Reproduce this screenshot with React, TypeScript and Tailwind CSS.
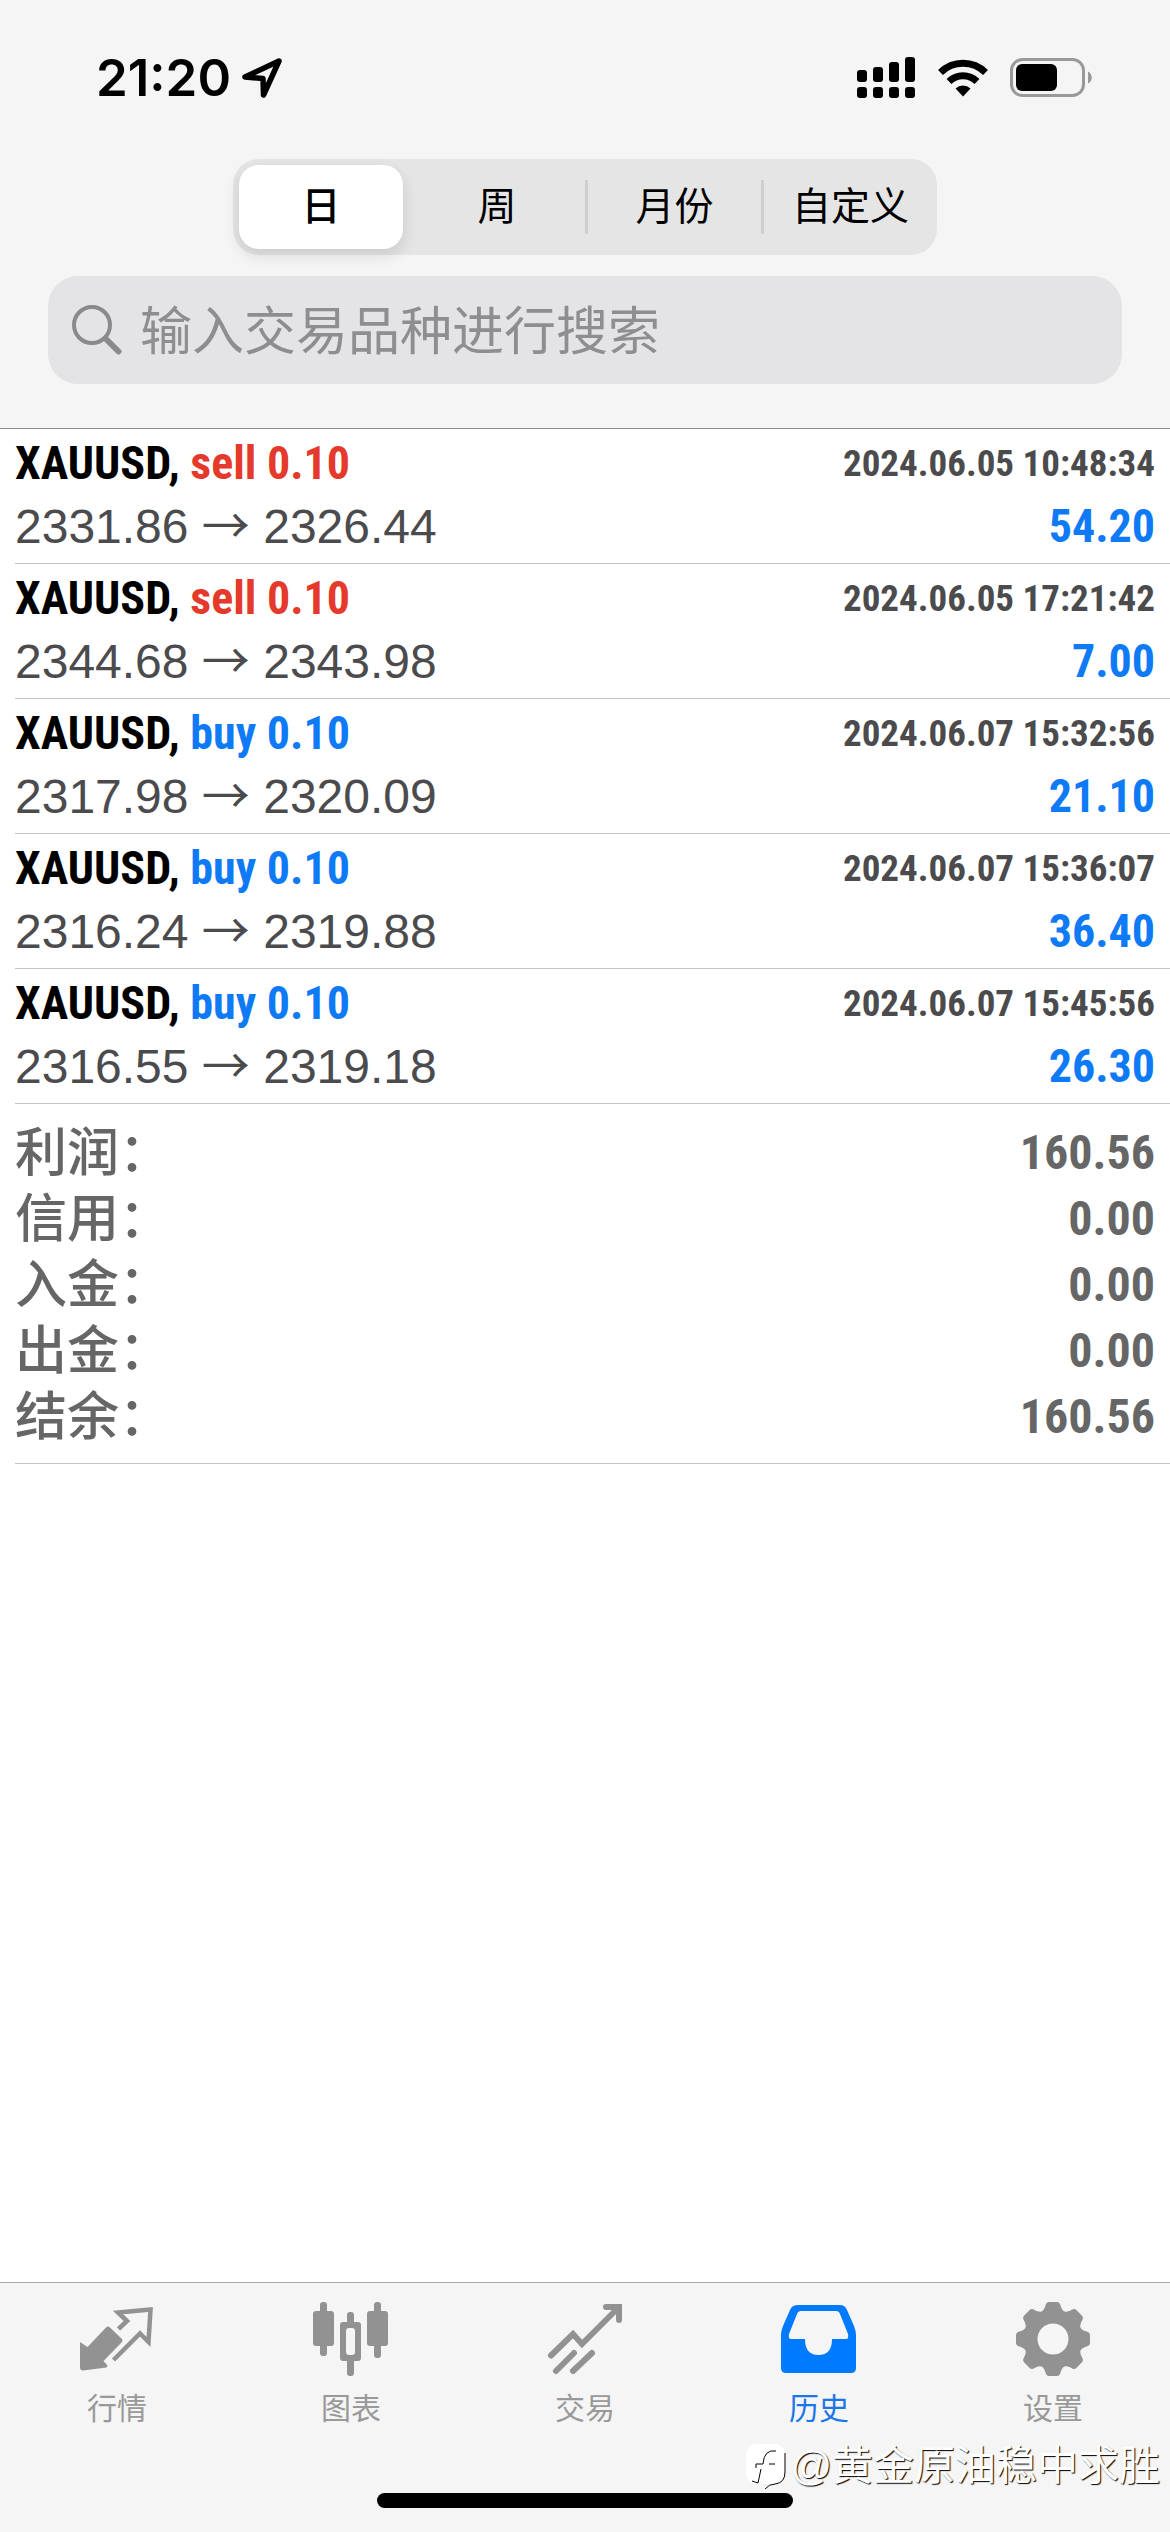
import type { ReactNode } from 'react';

interface Deal {
  side: 'buy' | 'sell';
  volume: string;
  open: string;
  close: string;
  time: string;
  profit: string;
}

const periods = ['日', '周', '月份', '自定义'];

const deals: Deal[] = [
  { side: 'sell', volume: '0.10', open: '2331.86', close: '2326.44', time: '2024.06.05 10:48:34', profit: '54.20' },
  { side: 'sell', volume: '0.10', open: '2344.68', close: '2343.98', time: '2024.06.05 17:21:42', profit: '7.00' },
  { side: 'buy', volume: '0.10', open: '2317.98', close: '2320.09', time: '2024.06.07 15:32:56', profit: '21.10' },
  { side: 'buy', volume: '0.10', open: '2316.24', close: '2319.88', time: '2024.06.07 15:36:07', profit: '36.40' },
  { side: 'buy', volume: '0.10', open: '2316.55', close: '2319.18', time: '2024.06.07 15:45:56', profit: '26.30' },
];

const summary = [
  { label: '利润', value: '160.56' },
  { label: '信用', value: '0.00' },
  { label: '入金', value: '0.00' },
  { label: '出金', value: '0.00' },
  { label: '结余', value: '160.56' },
];

function StatusBar() {
  return (
    <div className="flex items-center justify-between pt-[47px] pr-[77px] pl-24">
      <div className="flex items-center gap-[10px]">
        <span className="font-['Inter',sans-serif] text-[51px] leading-[62px] font-semibold">21:20</span>
        <svg width="42" height="42" viewBox="0 0 42 42" fill="none" stroke="#000" strokeWidth="5.5" strokeLinejoin="round">
          <path d="M38 4 4 20 22 21.500 22.500 38Z" />
        </svg>
      </div>
      <div className="flex items-center gap-[22px]">
        <svg width="60" height="42" viewBox="0 0 60 42">
          <rect x="1" y="13" width="10" height="12" rx="3" />
          <rect x="17" y="10" width="10" height="15" rx="3" />
          <rect x="33" y="5" width="10" height="20" rx="3" />
          <rect x="49" y="0" width="10" height="25" rx="3" />
          <rect x="1" y="30" width="10" height="11" rx="3" />
          <rect x="17" y="30" width="10" height="11" rx="3" />
          <rect x="33" y="30" width="10" height="11" rx="3" />
          <rect x="49" y="30" width="10" height="11" rx="3" />
        </svg>
        <svg width="50" height="38" viewBox="0 0 50 38">
          <g fill="none" stroke="#000" strokeWidth="7">
            <path d="M2.500 13.500a32 32 0 0 1 45 0" />
            <path d="M11 22.500a20 20 0 0 1 28 0" />
          </g>
          <path d="M17.500 29.500a11 11 0 0 1 15 0L25 37.500Z" />
        </svg>
        <svg width="83" height="40" viewBox="0 0 83 40">
          <rect x="1.500" y="1.500" width="72" height="36" rx="11" fill="none" stroke="#999" strokeWidth="3" />
          <rect x="6" y="6" width="41" height="27" rx="6" />
          <path d="M78 13.500c5 2 5 10 0 12Z" fill="#999" />
        </svg>
      </div>
    </div>
  );
}

function PeriodPicker() {
  return (
    <div className="mx-auto mt-[50px] grid h-24 w-[704px] grid-cols-4 rounded-[26px] bg-[#e5e5e5]">
      {periods.map((period, i) => (
        <div key={period} className="flex items-center">
          {i > 1 && <span className="h-[54px] w-[3px] bg-[#cfcfd1]" />}
          <button
            type="button"
            className={
              i === 0
                ? 'm-[6px] h-[84px] flex-1 rounded-[20px] bg-white text-[39px] font-medium shadow-[0_6px_16px_rgba(0,0,0,0.12)]'
                : 'h-full flex-1 text-[39px]'
            }
          >
            {period}
          </button>
        </div>
      ))}
    </div>
  );
}

function SearchBox() {
  return (
    <label className="mx-12 mt-[21px] mb-11 flex h-[108px] items-center gap-[18px] rounded-[30px] bg-[#e4e4e6] px-6">
      <svg width="50" height="50" viewBox="0 0 50 50" fill="none" stroke="#8a8a8e" strokeLinecap="round">
        <circle cx="20" cy="20" r="18" strokeWidth="4" />
        <path d="m33.500 33.500 13 13" strokeWidth="6" />
      </svg>
      <input
        type="search"
        aria-label="搜索"
        placeholder="输入交易品种进行搜索"
        className="min-w-0 flex-1 bg-transparent pt-1 text-[52px] leading-[64px] outline-none placeholder:text-[#8e8e90]"
      />
    </label>
  );
}

function DealRow({ deal }: { deal: Deal }) {
  return (
    <li className="border-b border-[#c4c4c6] pt-[3px] pr-[15px] pb-[5px]">
      <div className="flex h-[63px] items-center justify-between font-['Roboto_Condensed',sans-serif] leading-[63px] font-bold">
        <span className="text-[46px]">
          XAUUSD,{' '}
          <span className={deal.side === 'sell' ? 'text-[#e5392b]' : 'text-[#0f7af5]'}>
            {deal.side} {deal.volume}
          </span>
        </span>
        <time className="text-[37px] text-[#4b4b4e]">{deal.time}</time>
      </div>
      <div className="flex h-[63px] items-center justify-between leading-[63px]">
        <span className="text-[48px] text-[#4b4b4e]">
          {deal.open} <span className="font-['Noto_Sans_CJK_SC',sans-serif] leading-none">→</span> {deal.close}
        </span>
        <span className="font-['Roboto_Condensed',sans-serif] text-[46px] font-bold text-[#0f7af5]">{deal.profit}</span>
      </div>
    </li>
  );
}

function Summary() {
  return (
    <dl className="border-b border-[#c4c4c6] pt-4 pr-[15px] pb-[13px] leading-[66px] text-[#666]">
      {summary.map((line) => (
        <div key={line.label} className="flex h-[66px] items-center justify-between">
          <dt className="text-[52px] font-medium">{line.label}：</dt>
          <dd className="font-['Roboto_Condensed',sans-serif] text-[48px] font-bold">{line.value}</dd>
        </div>
      ))}
    </dl>
  );
}

const QuotesIcon = () => (
  <svg width="76" height="76" viewBox="0 0 76 76">
    <path d="M1 41 8.500 46 27 26.500q2-2 4 0l11.500 11q2 2 0 4L24.500 60l4 4.500-1 2L4 69.500q-3 0-3-3Z" fill="#929292" />
    <path d="M39.500 28 48 20 39 11.500 71.500 8.500 69.500 41 61 32.500 34.500 59" fill="none" stroke="#929292" strokeWidth="4.5" />
  </svg>
);

const ChartIcon = () => (
  <svg width="76" height="76" viewBox="0 0 76 76" fill="#929292">
    <rect x="0" y="10" width="21" height="35" rx="3" />
    <rect x="7" y="1" width="7" height="54" rx="3" />
    <path fillRule="evenodd" d="M30 21h15q3 0 3 3v33q0 3-3 3H30q-3 0-3-3V24q0-3 3-3Zm6 6q-3 0-3 3v21q0 3 3 3h3q3 0 3-3V30q0-3-3-3Z" />
    <rect x="34" y="11" width="7" height="14" rx="3" />
    <rect x="34" y="56" width="7" height="19" rx="3" />
    <rect x="54" y="10" width="21" height="35" rx="3" />
    <rect x="61" y="1" width="7" height="56" rx="3" />
  </svg>
);

const TradeIcon = () => (
  <svg width="76" height="76" viewBox="0 0 76 76" fill="none" stroke="#929292" strokeWidth="6" strokeLinecap="round">
    <path d="M4 54.500 26 33l9 10L71 7" />
    <path d="M59 6h13v13" />
    <path d="m9 70 18-18M26 70l19-18" />
  </svg>
);

const HistoryIcon = () => (
  <svg width="76" height="76" viewBox="0 0 76 76">
    <path
      fill="#007aff"
      fillRule="evenodd"
      d="M17 4h42q5 0 7 5l7 16q2 5 2 9v33q0 5-5 5H5q-5 0-5-5V34q0-4 2-9L9 9q2-5 8-5Zm3 6q-3 0-4 3L8 33q-1 5 2 5h14q0 16 13.500 16T51 38h14q3 0 2-5L59 13q-1-3-4-3Z"
    />
  </svg>
);

const SettingsIcon = () => (
  <svg width="76" height="76" viewBox="-38 -38 76 76">
    <circle r="22.500" fill="none" stroke="#929292" strokeWidth="14" />
    <g fill="#929292">
      {[0, 45, 90, 135, 180, 225, 270, 315].map((angle) => (
        <path key={angle} transform={`rotate(${angle})`} d="M-14-26q4-1 6-6l1-3q1-2 3-2h8q2 0 3 2l1 3q2 5 6 6Z" />
      ))}
    </g>
  </svg>
);

const tabs: { label: string; icon: ReactNode; active?: boolean }[] = [
  { label: '行情', icon: <QuotesIcon /> },
  { label: '图表', icon: <ChartIcon /> },
  { label: '交易', icon: <TradeIcon /> },
  { label: '历史', icon: <HistoryIcon />, active: true },
  { label: '设置', icon: <SettingsIcon /> },
];

function TabBar() {
  return (
    <footer className="relative border-t border-[#a9a9ab] bg-[#f5f5f5]">
      <nav className="grid grid-cols-5 pt-[18px]">
        {tabs.map((tab) => (
          <a
            key={tab.label}
            href="#"
            className={
              tab.active
                ? 'flex flex-col items-center gap-[10px] text-[30px] leading-[44px] text-[#1a76e8]'
                : 'flex flex-col items-center gap-[10px] text-[30px] leading-[44px] text-[#999]'
            }
          >
            {tab.icon}
            {tab.label}
          </a>
        ))}
      </nav>
      <div className="mx-auto mt-[62px] mb-6 h-[15px] w-[416px] rounded-full bg-black" />
      <div className="absolute right-[10px] bottom-9 flex items-center gap-[3px] text-[41px] leading-[60px] text-white [text-shadow:1px_1px_1px_#000]">
        <svg width="42" height="46" viewBox="0 0 42 46">
          <path d="M12 1h16q12 0 12 12v16q0 10-9 12-7 0-11 4l1-4h-9Q1 41 1 29V13Q1 1 12 1Z" fill="#fff" />
          <path d="M40 10v19q0 11-10 12-6 0-10 5M31 8q-12-2-13 13h-7v4M24 21h6M16 26l-3 14-6-2" fill="none" stroke="#000" />
        </svg>
        <span>@黄金原油稳中求胜</span>
      </div>
    </footer>
  );
}

export default function App() {
  return (
    <div className="flex min-h-screen flex-col bg-white font-['Liberation_Sans','Noto_Sans_CJK_SC',sans-serif] text-black">
      <header className="border-b border-[#8c8c8c] bg-[#f5f5f5]">
        <StatusBar />
        <PeriodPicker />
        <SearchBox />
      </header>
      <main className="flex-1 pl-[15px]">
        <ul>
          {deals.map((deal) => (
            <DealRow key={deal.time} deal={deal} />
          ))}
        </ul>
        <Summary />
      </main>
      <TabBar />
    </div>
  );
}
